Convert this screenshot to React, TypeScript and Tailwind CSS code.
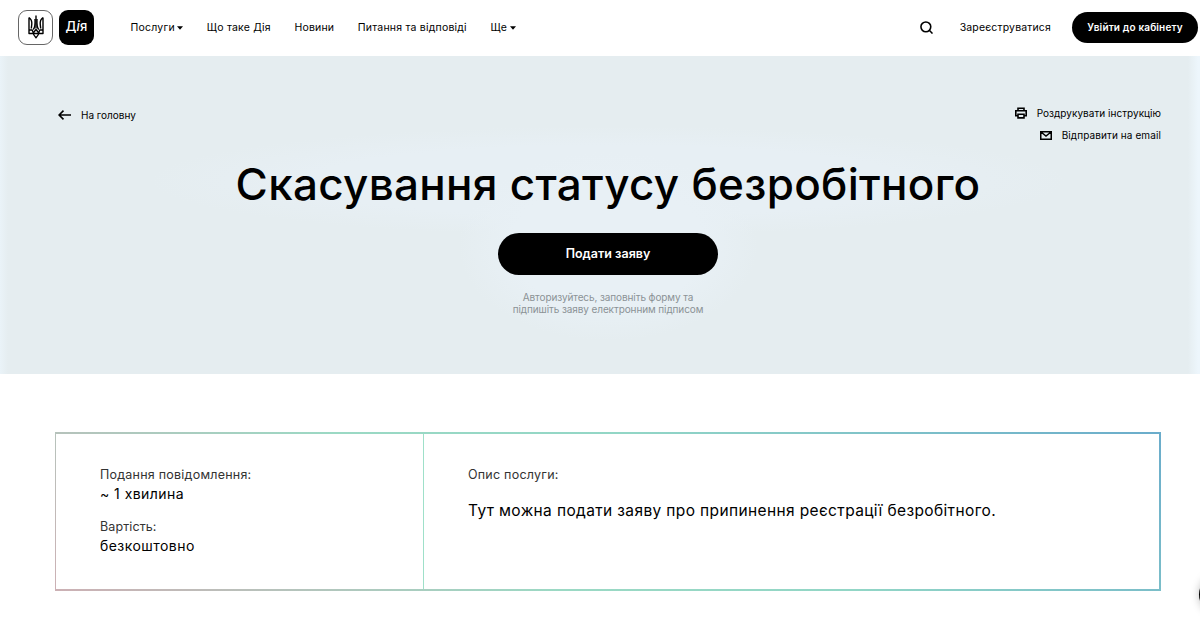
import React from "react";

const navItems = [
  { label: "Послуги", hasMenu: true },
  { label: "Що таке Дія" },
  { label: "Новини" },
  { label: "Питання та відповіді" },
  { label: "Ще", hasMenu: true },
];

const Trident = () => (
  <svg width="16" height="24" viewBox="0 0 16 24" fill="none" stroke="#000" strokeWidth="1.4" strokeLinejoin="round">
    <path d="M1 2.500v16h4.200M15 2.500v16h-4.200M1 2.500C3.600 4.500 4 6.500 3.800 9l-.5 4.500M15 2.500c-2.600 2-3 4-2.800 6.500l.5 4.500" />
    <path d="M8 .500v13M8 14.500 5.200 18c.2 2 1.300 3.200 2.800 4.800 1.500-1.600 2.600-2.800 2.800-4.800Z" />
    <path d="M1 15h3.200l1.300 3M15 15h-3.200l-1.300 3M5.200 18.500h5.600M7 4c.1 4 .6 8-1.800 10.500M9 4c-.1 4-.6 8 1.800 10.500" />
  </svg>
);

const Caret = () => (
  <svg width="6" height="4" viewBox="0 0 6 4">
    <path d="M0 .3h6L3 3.700Z" fill="#000" />
  </svg>
);

const Header = () => (
  <header className="flex h-14 items-center bg-white pb-0.5 pl-[18px] pr-[2px] text-[10.5px] tracking-[0.02em]">
    <div className="flex h-[35px] w-[35px] items-center justify-center rounded-[9px] border border-[#666]">
      <Trident />
    </div>
    <div className="ml-1.5 flex h-[35px] w-[35px] items-center justify-center rounded-[9px] bg-black text-[13px] font-medium text-white">
      Д<span className="italic">і</span>я
    </div>
    <nav className="ml-[36.5px] flex items-center gap-[23.5px] pt-0.5">
      {navItems.map((item) => (
        <a key={item.label} className="flex items-center gap-[2.5px] whitespace-nowrap">
          {item.label}
          {item.hasMenu && <Caret />}
        </a>
      ))}
    </nav>
    <svg className="ml-auto mt-px" width="13" height="13" viewBox="0 0 14 14" fill="none" stroke="#000" strokeWidth="1.7">
      <circle cx="6.300" cy="6.300" r="5.300" />
      <path d="m10 10 3.500 3.500" />
    </svg>
    <a className="ml-[27px] whitespace-nowrap pt-0.5 tracking-[0.015em]">Зареєструватися</a>
    <button className="ml-[21px] h-[31px] w-[126px] whitespace-nowrap rounded-full bg-black text-[10px] font-semibold tracking-[0.015em] text-white">
      Увійти до кабінету
    </button>
  </header>
);

const Hero = () => (
  <section className="h-[318px] bg-[#e5edf0] bg-[linear-gradient(90deg,#eaf3f8_0px,transparent_8px,transparent_1188px,#edf6fc_1198px),radial-gradient(ellipse_150px_95px_at_608px_190px,#e8f0f5_65%,#e8f0f500_100%),radial-gradient(ellipse_460px_55px_at_608px_125px,#e7eff4_65%,#e7eff400_100%)] pl-[58px] pr-[39px] pt-[46px]">
    <div className="flex h-[46px] justify-between text-[10px]">
      <a className="flex h-[26px] items-center gap-[10px]">
        <svg width="13" height="10" viewBox="0 0 13 10" fill="none" stroke="#000" strokeWidth="1.600">
          <path d="M13 5H1M5.500.600 1.100 5l4.400 4.400" />
        </svg>
        На головну
      </a>
      <div className="flex flex-col items-end">
        <a className="flex h-[22px] items-center gap-[10px]">
          <svg width="12" height="12" viewBox="0 0 12 12" fill="none" stroke="#000" strokeWidth="1.600">
            <path d="M3 3.500V1.300h6v2.200M3 8.700H.800V3.700h10.400v5H9M3 7.200h6v3.700H3Z" />
          </svg>
          <span className="tracking-[0.003em]">Роздрукувати інструкцію</span>
        </a>
        <a className="flex h-[22px] items-center gap-[10px]">
          <svg width="12" height="9" viewBox="0 0 12 9" fill="none" stroke="#000" strokeWidth="1.500">
            <path d="M.750.750h10.500v7.500H.750ZM1 1l5 4 5-4" />
          </svg>
          <span className="tracking-[0.01em]">Відправити на email</span>
        </a>
      </div>
    </div>
    <div className="mr-[3px] flex flex-col items-center">
      <h1 className="mt-2 whitespace-nowrap text-[44px] font-medium leading-[56px] tracking-[0.3px]">
        Скасування статусу безробітного
      </h1>
      <button className="mt-[21px] h-[42px] w-[220px] rounded-full bg-black text-[12.5px] font-semibold text-white">
        Подати заяву
      </button>
      <p className="mt-4 text-center text-[10px] leading-3 tracking-[-0.01em] text-[#8b9295]">
        Авторизуйтесь, заповніть форму та
        <br />
        підпишіть заяву електронним підписом
      </p>
    </div>
  </section>
);

const ServiceInfo = () => (
  <section className="ml-[55px] mt-[58px] h-[159px] w-[1106px] bg-[linear-gradient(35deg,#ccb0b4_0%,#9bd9c4_38%,#92d6c6_60%,#6aaccb_100%)] p-[2px] pl-px">
    <div className="flex h-full bg-white">
      <div className="w-[367px] pl-11 pt-8">
        <p className="text-[12.5px] leading-[18px] tracking-[0.23px] text-[#333]">Подання повідомлення:</p>
        <p className="text-[14px] leading-5 tracking-[0.45px]">~ 1 хвилина</p>
        <p className="mt-[14px] text-[12.5px] leading-[18px] tracking-[0.1px] text-[#333]">Вартість:</p>
        <p className="text-[14px] leading-5 tracking-[0.45px]">безкоштовно</p>
      </div>
      <div className="w-px bg-[#9fe0c9]" />
      <div className="pl-11 pt-8">
        <p className="text-[12.5px] leading-[18px] tracking-[0.23px] text-[#333]">Опис послуги:</p>
        <p className="mt-[15px] whitespace-nowrap text-[15.5px] leading-6 tracking-[0.37px]">
          Тут можна подати заяву про припинення реєстрації безробітного.
        </p>
      </div>
    </div>
  </section>
);

const App = () => (
  <div className="relative h-[624px] w-[1200px] overflow-hidden bg-white font-['Inter',sans-serif] text-black">
    <Header />
    <Hero />
    <ServiceInfo />
    {/* Chat widget, mostly off the right edge */}
    <div className="absolute -right-10 top-[574px] h-[41px] w-[41px] rounded-full bg-black shadow-[0_0_8px_rgba(0,0,0,0.25)]" />
  </div>
);

export default App;
